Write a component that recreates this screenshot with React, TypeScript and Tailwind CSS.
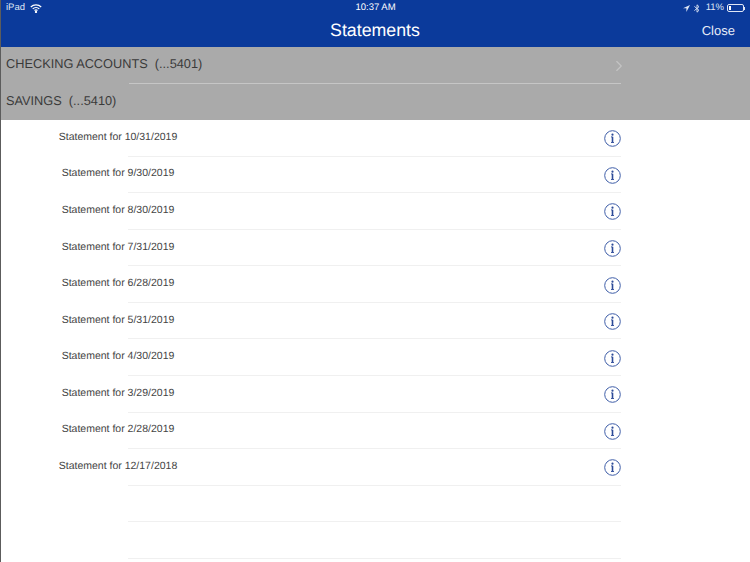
import { ChevronRight } from "lucide-react";

const statements = [
  "10/31/2019",
  "9/30/2019",
  "8/30/2019",
  "7/31/2019",
  "6/28/2019",
  "5/31/2019",
  "4/30/2019",
  "3/29/2019",
  "2/28/2019",
  "12/17/2018",
];

function StatusBar() {
  return (
    <div className="flex h-[15px] items-center justify-between pl-[5px] pr-[5px] pt-[1px] text-[9.5px] text-[#dfe6f5]">
      <div className="flex w-[200px] items-center gap-[5px]">
        <span>iPad</span>
        <svg width="12" height="9" viewBox="0 0 12 9" fill="none" stroke="#ffffff" strokeWidth="1.3">
          <path d="M0.8 3a7.4 7.4 0 0 1 10.4 0" />
          <path d="M2.7 4.9a4.7 4.7 0 0 1 6.6 0" />
          <path d="M4.5 6.6a2.2 2.2 0 0 1 3 0" />
          <circle cx="6" cy="7.9" r="0.5" fill="#ffffff" />
        </svg>
      </div>
      <span className="text-white">10:37 AM</span>
      <div className="flex w-[200px] items-center justify-end gap-[3px]">
        <svg className="mr-[1px]" width="7" height="7" viewBox="0 0 7 7" fill="#dfe6f5">
          <path d="M7 0 0 3.2h3.4V7z" />
        </svg>
        <svg className="mr-[3px]" width="6" height="9" viewBox="0 0 6 9" fill="none" stroke="#dfe6f5" strokeWidth="0.9">
          <path d="M0.4 2.4 5 6.3 3 8.2V0.8L5 2.7 0.4 6.6" />
        </svg>
        <span>11%</span>
        <div className="flex items-center">
          <div className="h-[8px] w-[17px] rounded-[2px] border border-[#dfe6f5] p-[1px]">
            <div className="h-full w-[2px] bg-white" />
          </div>
          <div className="h-[3px] w-[1px] bg-[#dfe6f5]" />
        </div>
      </div>
    </div>
  );
}

function InfoIcon() {
  return (
    <svg width="17" height="17" viewBox="0 0 17 17" fill="none">
      <circle cx="8.5" cy="8.5" r="7.8" stroke="#3f5ea8" strokeWidth="1" />
      <circle cx="8.5" cy="4.7" r="1.1" fill="#2c4a98" />
      <path d="M8.5 6.8v5.6" stroke="#2c4a98" strokeWidth="1.6" />
      <path d="M7 6.9h1.5M7 12.5h3" stroke="#2c4a98" strokeWidth="0.9" />
    </svg>
  );
}

export default function App() {
  return (
    <div
      className="h-[562px] w-[750px] overflow-hidden border-l border-[#5c5c5c] bg-white [text-rendering:geometricPrecision]"
      style={{ fontFamily: '"Liberation Sans", Arial, sans-serif' }}
    >
      <header className="h-[47px] bg-[#0b3a9b]">
        <StatusBar />
        <div className="flex h-[30px] items-center justify-between">
          <div className="w-[80px]" />
          <h1 className="-ml-[1px] text-[17.8px] text-white">Statements</h1>
          <div className="w-[80px] pr-[15px] pt-[2px] text-right text-[13px] text-[#e8edf8]">Close</div>
        </div>
      </header>

      <section className="bg-[#aaaaaa] text-[12.75px] text-[#3a3a3a]">
        <div className="relative flex h-[36.5px] w-[620px] items-center justify-between pl-[5px] pb-[3px]">
          <span>CHECKING ACCOUNTS&nbsp;&nbsp;(...5401)</span>
          <ChevronRight className="-mr-[7px] mt-[4px] h-[18px] w-[18px] text-[#c4c4c4]" strokeWidth={1.5} />
          <div className="absolute bottom-0 left-[128px] right-0 h-px bg-[#c6c6c6]" />
        </div>
        <div className="flex h-[36.5px] items-center pl-[5px] pb-[2px]">
          <span>SAVINGS&nbsp;&nbsp;(...5410)</span>
        </div>
      </section>

      <ul className="text-[10.5px] text-[#444444]">
        {statements.map((date) => (
          <li key={date} className="relative flex h-[36.57px] w-[620px] items-center justify-between">
            <span className="w-[234px] pb-[1px] text-center">Statement for {date}</span>
            <span className="pt-[1px]">
              <InfoIcon />
            </span>
            <div className="absolute bottom-0 left-[127px] right-0 h-px bg-[#f0f0f0]" />
          </li>
        ))}
        <li className="relative h-[36.57px] w-[620px]">
          <div className="absolute bottom-0 left-[127px] right-0 h-px bg-[#f0f0f0]" />
        </li>
        <li className="relative h-[36.57px] w-[620px]">
          <div className="absolute bottom-0 left-[127px] right-0 h-px bg-[#f0f0f0]" />
        </li>
      </ul>
    </div>
  );
}
